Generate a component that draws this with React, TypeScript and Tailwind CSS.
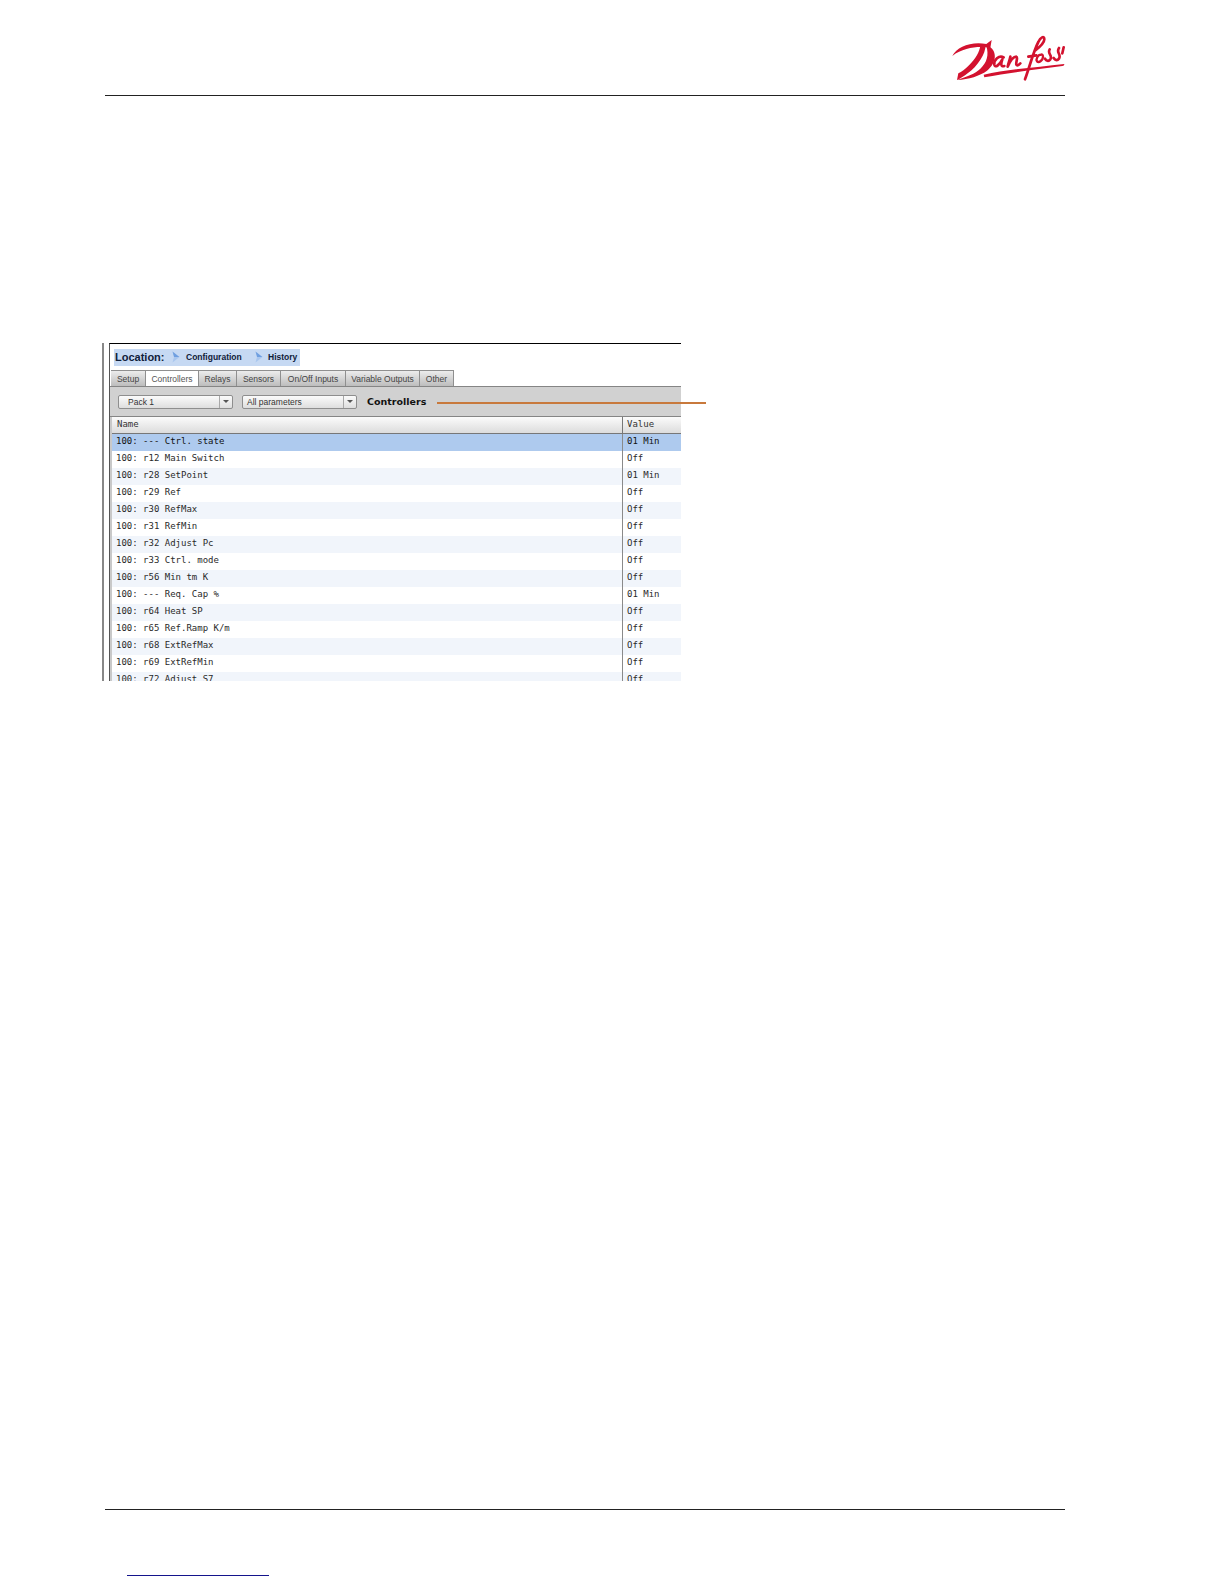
import React from "react";

const rows: [string, string][] = [
  ["--- Ctrl. state", "01 Min"],
  ["r12 Main Switch", "Off"],
  ["r28 SetPoint", "01 Min"],
  ["r29 Ref", "Off"],
  ["r30 RefMax", "Off"],
  ["r31 RefMin", "Off"],
  ["r32 Adjust Pc", "Off"],
  ["r33 Ctrl. mode", "Off"],
  ["r56 Min tm K", "Off"],
  ["--- Req. Cap %", "01 Min"],
  ["r64 Heat SP", "Off"],
  ["r65 Ref.Ramp K/m", "Off"],
  ["r68 ExtRefMax", "Off"],
  ["r69 ExtRefMin", "Off"],
  ["r72 Adjust S7", "Off"],
];

const tabs: { label: string; w: string; active?: boolean }[] = [
  { label: "Setup", w: "w-[35px]" },
  { label: "Controllers", w: "w-[53px]", active: true },
  { label: "Relays", w: "w-[38px]" },
  { label: "Sensors", w: "w-[44px]" },
  { label: "On/Off Inputs", w: "w-[65px]" },
  { label: "Variable Outputs", w: "w-[74px]" },
  { label: "Other", w: "w-[34px]" },
];

function Logo() {
  const red = "#d3122f";
  return (
    <svg width="116" height="60" viewBox="0 0 348 180" fill="none">
      <path
        d="M10 78 C24 50 66 34 112 42 L128 30 L124 54 C96 48 46 50 10 78 Z"
        fill={red}
      />
      <path
        d="M110 44 C110 72 86 108 56 130 C46 138 34 146 24 150 L28 130 C38 126 48 118 60 106 C80 86 92 66 94 46 Z"
        fill={red}
      />
      <path
        d="M122 50 C144 64 144 98 114 122 C92 138 60 148 24 150 C54 138 78 132 94 116 C114 98 120 74 112 48 Z"
        fill={red}
      />
      <path d="M104 134 C170 118 262 112 346 102 C346 106 344 108 340 108 C264 118 180 128 106 142 Z" fill={red} />
      <path
        d="M164 82 C150 74 134 90 136 104 C138 114 150 108 160 88 C156 100 154 112 166 108"
        stroke={red}
        strokeWidth="8"
        strokeLinecap="round"
        strokeLinejoin="round"
      />
      <path
        d="M184 80 C182 90 178 100 176 110 C182 96 192 80 202 80 C208 82 200 96 202 104 C205 109 210 104 214 100"
        stroke={red}
        strokeWidth="8"
        strokeLinecap="round"
        strokeLinejoin="round"
      />
      <path
        d="M228 148 C240 116 254 62 268 36 C274 22 286 16 286 28 C286 40 274 50 258 62 M238 80 C246 78 254 77 262 76"
        stroke={red}
        strokeWidth="8"
        strokeLinecap="round"
        strokeLinejoin="round"
      />
      <path
        d="M276 74 C266 74 260 88 264 94 C270 100 282 90 282 80 C282 74 278 72 276 74"
        stroke={red}
        strokeWidth="7"
        strokeLinecap="round"
      />
      <path
        d="M302 58 C294 72 312 76 304 88 C298 96 292 92 288 86 M330 54 C320 68 338 72 330 86 C324 94 318 90 314 84 M344 52 L340 70"
        stroke={red}
        strokeWidth="8"
        strokeLinecap="round"
        strokeLinejoin="round"
      />
    </svg>
  );
}

function Arrow() {
  return (
    <svg width="8" height="12" viewBox="0 0 8 12" className="shrink-0">
      <path d="M0.5 0.5 L7.5 6 L2 6 Z" fill="#6f9fe0" />
      <path d="M2 6 L7.5 6 L0.5 11.5 Z" fill="#a9c6ee" />
    </svg>
  );
}

function Select({ label, textPad }: { label: string; textPad: string }) {
  return (
    <div className="flex h-[14px] w-[115px] rounded-[2px] border border-[#8e8e8e] bg-gradient-to-b from-[#fbfbfb] to-[#dedede] text-[8.5px] leading-[12px] text-[#333]">
      <div className={`flex-1 ${textPad}`}>{label}</div>
      <div className="flex w-[13px] items-center justify-center border-l border-[#a8a8a8]">
        <div className="h-0 w-0 border-x-[3px] border-t-[3px] border-x-transparent border-t-[#555]" />
      </div>
    </div>
  );
}

export default function App() {
  return (
    <div className="flex h-[1584px] w-[1224px] flex-col overflow-hidden bg-white font-['Liberation_Sans',sans-serif]">
      <header className="ml-[105px] flex h-[96px] w-[960px] justify-end border-b border-[#222] pt-[30px]">
        <Logo />
      </header>

      <div className="relative ml-[102px] mt-[247px] flex h-[338px] w-[579px]">
        <div className="w-[2px] bg-[#888]" />
        <div className="ml-[5px] flex w-[572px] flex-col overflow-hidden border-l border-t border-l-[#555] border-t-black">
          <div className="h-[26px] pl-[4px] pt-[5px]">
            <div className="flex h-[17px] w-[186px] items-center bg-[#c6d9f3] pb-[1px] pl-[1px] font-bold text-[#10203a]">
              <span className="w-[57px] text-[11px]">Location:</span>
              <Arrow />
              <span className="ml-[6px] w-[69px] text-[8.5px]">Configuration</span>
              <Arrow />
              <span className="ml-[5px] text-[8.5px]">History</span>
            </div>
          </div>

          <div className="flex h-[16px] pl-[1px]">
            {tabs.map((t) => (
              <div
                key={t.label}
                className={`${t.w} border-r border-t border-[#8f8f8f] text-center text-[8.5px] leading-[16px] ${
                  t.active
                    ? "bg-white text-[#555]"
                    : "bg-gradient-to-b from-[#ececec] to-[#bdbdbd] text-[#444]"
                }`}
              >
                {t.label}
              </div>
            ))}
          </div>

          <div className="flex h-[31px] items-center gap-[9px] border-y border-[#858585] bg-[#d1d1d1] pl-[8px]">
            <Select label="Pack 1" textPad="pl-[9px]" />
            <Select label="All parameters" textPad="pl-[4px]" />
            <span className="ml-[1px] pt-[2px] font-['DejaVu_Sans',sans-serif] text-[9.5px] font-bold text-[#111]">
              Controllers
            </span>
          </div>

          <div className="flex flex-1 flex-col overflow-hidden border-l-[2px] border-[#c9c9c9] font-['DejaVu_Sans_Mono',monospace] text-[9px] text-[#2a2a2a]">
            <div className="flex h-[17px] shrink-0 border-b border-[#777] bg-gradient-to-b from-[#fbfbfb] to-[#dcdcdc] leading-[14px] text-[#333]">
              <div className="w-[510px] pl-[5px]">Name</div>
              <div className="flex-1 border-l border-[#777] pl-[4px]">Value</div>
            </div>
            {rows.map(([name, value], i) => (
              <div
                key={name}
                className={`flex h-[17px] shrink-0 leading-[14px] ${
                  i === 0 ? "bg-[#aecaee] text-[#111]" : i % 2 === 0 ? "bg-[#f1f5fb]" : "bg-white"
                }`}
              >
                <div className="w-[510px] pl-[4px]">100: {name}</div>
                <div className="flex-1 border-l border-[#8a8a8a] pl-[4px]">{value}</div>
              </div>
            ))}
          </div>
        </div>
        <div className="absolute left-[335px] top-[59px] h-[2px] w-[269px] bg-[#c8793c]" />
      </div>

      <footer className="mt-auto mb-[8px] ml-[105px] w-[960px] border-t border-[#222] pt-[65px]">
        <div className="ml-[22px] w-[142px] border-b border-[#14148c]" />
      </footer>
    </div>
  );
}
